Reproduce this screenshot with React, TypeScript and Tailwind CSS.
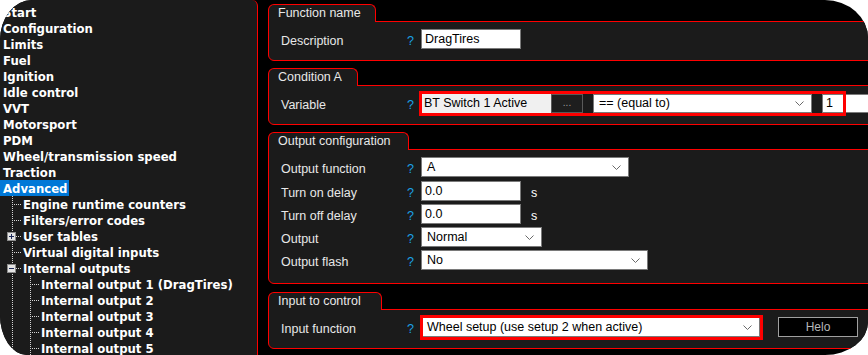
import React from "react"

type Cell = "pipe" | "tee"

type TreeItem = {
    label: string
    cells: Cell[]
    box?: "+" | "-"
    selected?: boolean
}

const treeItems: TreeItem[] = [
    { label: "Start", cells: [] },
    { label: "Configuration", cells: [] },
    { label: "Limits", cells: [] },
    { label: "Fuel", cells: [] },
    { label: "Ignition", cells: [] },
    { label: "Idle control", cells: [] },
    { label: "VVT", cells: [] },
    { label: "Motorsport", cells: [] },
    { label: "PDM", cells: [] },
    { label: "Wheel/transmission speed", cells: [] },
    { label: "Traction", cells: [] },
    { label: "Advanced", cells: [], selected: true },
    { label: "Engine runtime counters", cells: ["tee"] },
    { label: "Filters/error codes", cells: ["tee"] },
    { label: "User tables", cells: ["tee"], box: "+" },
    { label: "Virtual digital inputs", cells: ["tee"] },
    { label: "Internal outputs", cells: ["tee"], box: "-" },
    { label: "Internal output 1 (DragTires)", cells: ["pipe", "tee"] },
    { label: "Internal output 2", cells: ["pipe", "tee"] },
    { label: "Internal output 3", cells: ["pipe", "tee"] },
    { label: "Internal output 4", cells: ["pipe", "tee"] },
    { label: "Internal output 5", cells: ["pipe", "tee"] },
]

const TreeCell = ({ kind, box }: { kind: Cell; box?: "+" | "-" }) => (
    <svg width="18" height="16" className="shrink-0">
        <line x1="9.5" y1="0" x2="9.5" y2="16" stroke="#d4d4d4" strokeDasharray="1 1" />
        {kind === "tee" && (
            <line x1="11" y1="8.5" x2="18" y2="8.5" stroke="#d4d4d4" strokeDasharray="1 1" />
        )}
        {box && (
            <>
                <rect x="4.5" y="4.5" width="8" height="8" fill="#e4e4e4" stroke="#8c8c8c" />
                <line x1="6" y1="8.5" x2="11" y2="8.5" stroke="#1d2a5a" />
                {box === "+" && <line x1="8.5" y1="6" x2="8.5" y2="11" stroke="#1d2a5a" />}
            </>
        )}
    </svg>
)

const Tree = () => (
    <div className="w-[258px] h-full shrink-0 flex flex-col bg-[#1b1b1b] border-r border-[#ff0000] rounded-tr-[6px] font-['DejaVu_Sans',sans-serif] font-bold text-[11.7px] text-white">
        <div className="h-px ml-[67px] bg-[#ff0000] rounded-tr-[6px]" />
        <div className="pt-[4px]">
            {treeItems.map((item) => (
                <div key={item.label} className={item.cells.length ? "flex h-[16px] pl-[3px]" : "flex h-[16px]"}>
                    {item.cells.map((c, i) => (
                        <TreeCell key={i} kind={c} box={i === item.cells.length - 1 ? item.box : undefined} />
                    ))}
                    <span
                        className={
                            (item.cells.length ? "pl-[2px] " : "pl-[3px] ") +
                            "pr-[2px] leading-[16px] pt-px whitespace-nowrap " +
                            (item.selected ? "bg-[#0078d7]" : "")
                        }
                    >
                        {item.label}
                    </span>
                </div>
            ))}
        </div>
    </div>
)

const Chevron = () => (
    <svg width="9" height="5" className="ml-auto shrink-0">
        <polyline points="0.5,0.5 4.5,4.5 8.5,0.5" fill="none" stroke="#6a6a6a" />
    </svg>
)

const Section = ({ title, tabWidth, children }: { title: string; tabWidth: string; children: React.ReactNode }) => (
    <div className="w-[640px] flex flex-col shrink-0">
        <div
            className={
                tabWidth +
                " h-[18px] -mb-px relative z-10 bg-[#1b1b1b] border-x border-t border-[#ff0000] rounded-t-[6px] pl-[9px] leading-[16px] text-[#e8e8e8] whitespace-nowrap"
            }
        >
            {title}
        </div>
        <div className="bg-[#1b1b1b] border border-[#ff0000] rounded-tr-[6px] rounded-b-[6px] pl-[12px]">{children}</div>
    </div>
)

const Row = ({ label, className, children }: { label: string; className?: string; children: React.ReactNode }) => (
    <div className={"flex items-center " + (className ?? "h-[20px]")}>
        <span className="w-[126px] shrink-0 pt-[4px] text-[#e8e8e8] whitespace-nowrap">{label}</span>
        <span className="w-[14px] shrink-0 pt-[4px] text-[#1aa1e6]">?</span>
        {children}
    </div>
)

const Field = ({ value, width }: { value: string; width: string }) => (
    <div className={width + " h-full shrink-0 bg-white border border-[#7a7a7a] pl-[3px] flex items-center text-black"}>
        {value}
    </div>
)

const Select = ({ value, width }: { value: string; width: string }) => (
    <div className={width + " h-full shrink-0 bg-white border border-[#7a7a7a] pl-[5px] pr-[7px] flex items-center text-black whitespace-nowrap"}>
        <span>{value}</span>
        <Chevron />
    </div>
)

export default function App() {
    return (
        <div className="w-[868px] h-[355px] bg-white overflow-hidden">
            <div className="flex w-full h-full overflow-hidden bg-black rounded-tl-[32px_40px] rounded-tr-[43px_38px] rounded-bl-[27px_40px] rounded-br-[43px_33px]">
                <Tree />

                <div className="flex-1 min-w-0 overflow-hidden flex flex-col gap-[7px] pt-[4px] pl-[10px] font-['Liberation_Sans',Arial,sans-serif] text-[12.5px]">
                    <Section title="Function name" tabWidth="w-[108px]">
                        <div className="pt-[7px] pb-[11px]">
                            <Row label="Description">
                                <Field value="DragTires" width="w-[100px]" />
                            </Row>
                        </div>
                    </Section>

                    <Section title="Condition A" tabWidth="w-[90px]">
                        <div className="pt-[8px] pb-[11px]">
                            <Row label="Variable" className="h-[19px]">
                                <div className="relative flex h-full">
                                    <div className="w-[130px] h-full bg-[#f0f0f0] pl-[3px] flex items-center text-black">
                                        BT Switch 1 Active
                                    </div>
                                    <div className="w-[32px] h-full border border-[#5a5a5a] bg-[#1e1e1e] text-[#9a9a9a] text-[10px] flex items-end justify-center pb-[2px]">
                                        ...
                                    </div>
                                    <Select value="== (equal to)" width="w-[219px] ml-[10px]" />
                                    <Field value="1" width="w-[60px] ml-[10px]" />
                                    <div className="absolute -left-[2px] -top-[3px] w-[427px] h-[25px] border-[3px] border-[#ff0000] pointer-events-none" />
                                </div>
                            </Row>
                        </div>
                    </Section>

                    <Section title="Output configuration" tabWidth="w-[141px]">
                        <div className="pt-[7px] pb-[13px] flex flex-col gap-[3px]">
                            <Row label="Output function" className="h-[20px] mb-[1px]">
                                <Select value="A" width="w-[208px]" />
                            </Row>
                            <Row label="Turn on delay">
                                <Field value="0.0" width="w-[100px]" />
                                <span className="ml-[10px] pt-[4px] text-white">s</span>
                            </Row>
                            <Row label="Turn off delay">
                                <Field value="0.0" width="w-[100px]" />
                                <span className="ml-[10px] pt-[4px] text-white">s</span>
                            </Row>
                            <Row label="Output">
                                <Select value="Normal" width="w-[121px]" />
                            </Row>
                            <Row label="Output flash">
                                <Select value="No" width="w-[227px]" />
                            </Row>
                        </div>
                    </Section>

                    <div className="mt-[1px]">
                        <Section title="Input to control" tabWidth="w-[114px]">
                            <div className="pt-[7px] pb-[11px]">
                                <Row label="Input function">
                                    <div className="relative h-full flex">
                                        <Select value="Wheel setup (use setup 2 when active)" width="w-[339px]" />
                                        <div className="absolute -left-[1px] -top-[2px] w-[343px] h-[25px] border-[3px] border-[#ff0000] pointer-events-none" />
                                    </div>
                                    <button className="ml-[18px] w-[80px] h-full shrink-0 bg-black border border-[#a0a0a0] text-[#b8b8b8] text-[12px] flex items-center justify-center">
                                        Helo
                                    </button>
                                </Row>
                            </div>
                        </Section>
                    </div>
                </div>
            </div>
        </div>
    )
}
